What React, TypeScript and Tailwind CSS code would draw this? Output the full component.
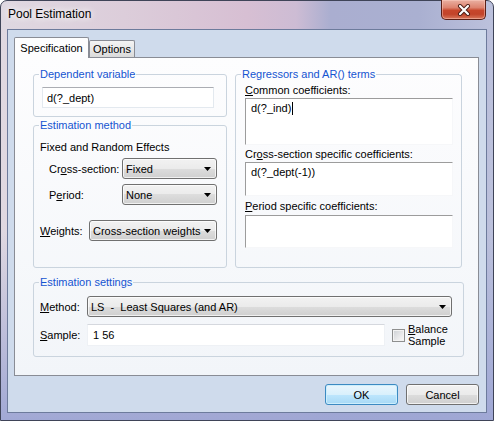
import React from "react";

function CloseButton() {
  return (
    <div className="ml-auto mr-[7px] -mt-px flex h-[20px] w-[45px] items-center justify-center rounded-b-[5px] border border-t-0 border-[#5a1f16] bg-[linear-gradient(180deg,#eab0a2_0%,#dd836f_40%,#c7462b_55%,#c2442a_75%,#d9775c_100%)] shadow-[inset_0_0_0_1px_rgba(255,210,200,0.45)]">
      <svg width="14" height="12" viewBox="0 0 14 12">
        <path d="M3 2 L11 10 M11 2 L3 10" stroke="#4a1d16" strokeWidth="4" strokeLinecap="round" />
        <path d="M3 2 L11 10 M11 2 L3 10" stroke="#ffffff" strokeWidth="2.2" strokeLinecap="round" />
      </svg>
    </div>
  );
}

function Combo({ value, className }: { value: string; className: string }) {
  return (
    <div
      className={
        "flex h-[21px] items-center rounded-[3px] border border-[#707070] bg-[linear-gradient(180deg,#f2f2f2_0%,#ebebeb_50%,#dddddd_50%,#cfcfcf_100%)] pl-[3px] pr-[5px] shadow-[inset_0_0_0_1px_rgba(255,255,255,0.7)] " +
        className
      }
    >
      <span className="flex-1 whitespace-pre">{value}</span>
      <svg width="7" height="4" viewBox="0 0 7 4">
        <polygon points="0,0 7,0 3.5,4" fill="#000" />
      </svg>
    </div>
  );
}

function TextArea({ children, className }: { children?: React.ReactNode; className: string }) {
  return (
    <div
      className={
        "w-[208px] border border-t-[#9c9c9c] border-l-[#9c9c9c] border-r-[#f6f7f9] border-b-[#f6f7f9] bg-white pl-[5px] pt-[2px] " +
        className
      }
    >
      {children}
    </div>
  );
}

const legend = "ml-[-1px] px-[1px] leading-[14px] text-[#1554d1]";
const group = "rounded-[3px] border border-[#cad4de]";

export default function App() {
  return (
    <div className="h-[421px] w-[494px] overflow-hidden">
      <div className="flex h-[421px] w-[494px] flex-col rounded-t-[7px] border border-[#3f4458] bg-[linear-gradient(180deg,transparent_0%,transparent_55%,rgba(158,166,212,0.95)_100%),linear-gradient(90deg,#dfd8e1_0%,#dccdda_25%,#d7bfd3_50%,#cdbcd4_60%,#aaaed0_67%,#aab0d1_85%,#bcc1dc_100%)] text-[11px] leading-[14px] text-black [font-family:'Liberation_Sans',Arial,sans-serif]">
        {/* Title bar */}
        <div className="flex h-[28px] items-start">
          <span className="pl-[7px] pt-[6px] text-[12px] leading-[15px] [text-shadow:0_0_6px_#fff,0_0_10px_#fff]">
            Pool Estimation
          </span>
          <CloseButton />
        </div>

        {/* Client area */}
        <div className="mx-[6px] h-[384px] border border-[#6d7b9c] bg-[#cfdbec] pl-[6px] pt-[7px]">
          <div className="w-[465px]">
            {/* Tabs */}
            <div className="flex h-[20px] items-end">
              <div className="relative z-10 -mb-px flex h-[21px] w-[75px] items-center justify-center rounded-t-[2px] border border-b-0 border-[#898c95] bg-[#fdfdfe]">
                Specification
              </div>
              <div className="flex h-[17px] w-[46px] items-center justify-center rounded-t-[2px] border border-b-0 border-[#898c95] bg-[linear-gradient(180deg,#f4f4f4_0%,#e8e8e8_50%,#dadada_100%)]">
                Options
              </div>
            </div>

            {/* Tab panel */}
            <div className="h-[319px] w-[465px] border border-[#898c95] bg-[linear-gradient(180deg,#fdfdfe_0%,#f2f5f9_100%)] pl-[18px] pt-[9px]">
              <div className="flex gap-[8px]">
                <div className="flex w-[194px] flex-col">
                  <fieldset className={group + " pl-[6px] pt-[6px] pb-[8px]"}>
                    <legend className={legend}>Dependent variable</legend>
                    <div className="ml-[2px] flex h-[21px] w-[172px] items-center border border-[#e3e9ef] border-t-[#abadb3] bg-white pl-[4px]">
                      d(?_dept)
                    </div>
                  </fieldset>
                  <fieldset className={group + " mt-[1px] flex-1 pl-[6px] pt-[8px]"}>
                    <legend className={legend}>Estimation method</legend>
                    <div>Fixed and Random Effects</div>
                    <div className="mt-[4px] flex h-[21px] items-center">
                      <span className="w-[82px] pl-[9px]">
                        Cr<u>o</u>ss-section:
                      </span>
                      <Combo value="Fixed" className="w-[95px]" />
                    </div>
                    <div className="mt-[5px] flex h-[21px] items-center">
                      <span className="w-[82px] pl-[9px]">
                        P<u>e</u>riod:
                      </span>
                      <Combo value="None" className="w-[95px]" />
                    </div>
                    <div className="mt-[15px] flex h-[21px] items-center">
                      <span className="w-[49px]">
                        <u>W</u>eights:
                      </span>
                      <Combo value="Cross-section weights" className="w-[128px]" />
                    </div>
                  </fieldset>
                </div>

                <fieldset className={group + " w-[227px] pl-[9px] pt-[2px] pb-[19px]"}>
                  <legend className={legend + " ml-[-4px]"}>Regressors and AR() terms</legend>
                  <div>
                    <u>C</u>ommon coefficients:
                  </div>
                  <TextArea className="mt-[1px] h-[47px]">
                    <span className="inline-flex items-center">
                      d(?_ind)
                      <span className="ml-[1px] inline-block h-[13px] w-px bg-black" />
                    </span>
                  </TextArea>
                  <div className="mt-[2px]">
                    Cr<u>o</u>ss-section specific coefficients:
                  </div>
                  <TextArea className="mt-[1px] h-[34px]">d(?_dept(-1))</TextArea>
                  <div className="mt-[3px]">
                    <u>P</u>eriod specific coefficients:
                  </div>
                  <TextArea className="mt-[2px] h-[33px]" />
                </fieldset>
              </div>

              <fieldset className={group + " mt-[7px] w-[431px] pl-[6px] pt-[7px] pb-[10px]"}>
                <legend className={legend}>Estimation settings</legend>
                <div className="flex h-[21px] items-center">
                  <span className="w-[47px]">
                    <u>M</u>ethod:
                  </span>
                  <Combo value="LS  -  Least Squares (and AR)" className="w-[365px]" />
                </div>
                <div className="mt-[7px] flex h-[22px] items-center">
                  <span className="w-[47px]">
                    <u>S</u>ample:
                  </span>
                  <div className="flex h-[22px] w-[298px] items-center border border-[#eef1f5] border-t-[#d5d8de] bg-white pl-[5px]">
                    1 56
                  </div>
                  <div className="ml-[7px] h-[13px] w-[13px] border border-[#8e8f8f] bg-[linear-gradient(135deg,#cdd0d4_0%,#eeeeef_70%,#fafafa_100%)] shadow-[inset_0_0_0_1px_#f3f3f3]" />
                  <div className="ml-[3px] leading-[12px]">
                    <div>
                      <u>B</u>alance
                    </div>
                    <div>Sample</div>
                  </div>
                </div>
              </fieldset>
            </div>

            {/* Buttons */}
            <div className="mt-[8px] flex justify-end gap-[8px]">
              <button className="h-[21px] w-[73px] rounded-[3px] border border-[#3c8ac2] bg-[linear-gradient(180deg,#eaf6fd_0%,#d9f0fc_50%,#bee6fd_50%,#a7d9f5_100%)] shadow-[inset_0_0_0_1px_#cdeefc]">
                OK
              </button>
              <button className="h-[21px] w-[73px] rounded-[3px] border border-[#707070] bg-[linear-gradient(180deg,#f2f2f2_0%,#ebebeb_50%,#dddddd_50%,#cfcfcf_100%)] shadow-[inset_0_0_0_1px_rgba(255,255,255,0.7)]">
                Cancel
              </button>
            </div>
          </div>
        </div>
      </div>
    </div>
  );
}
